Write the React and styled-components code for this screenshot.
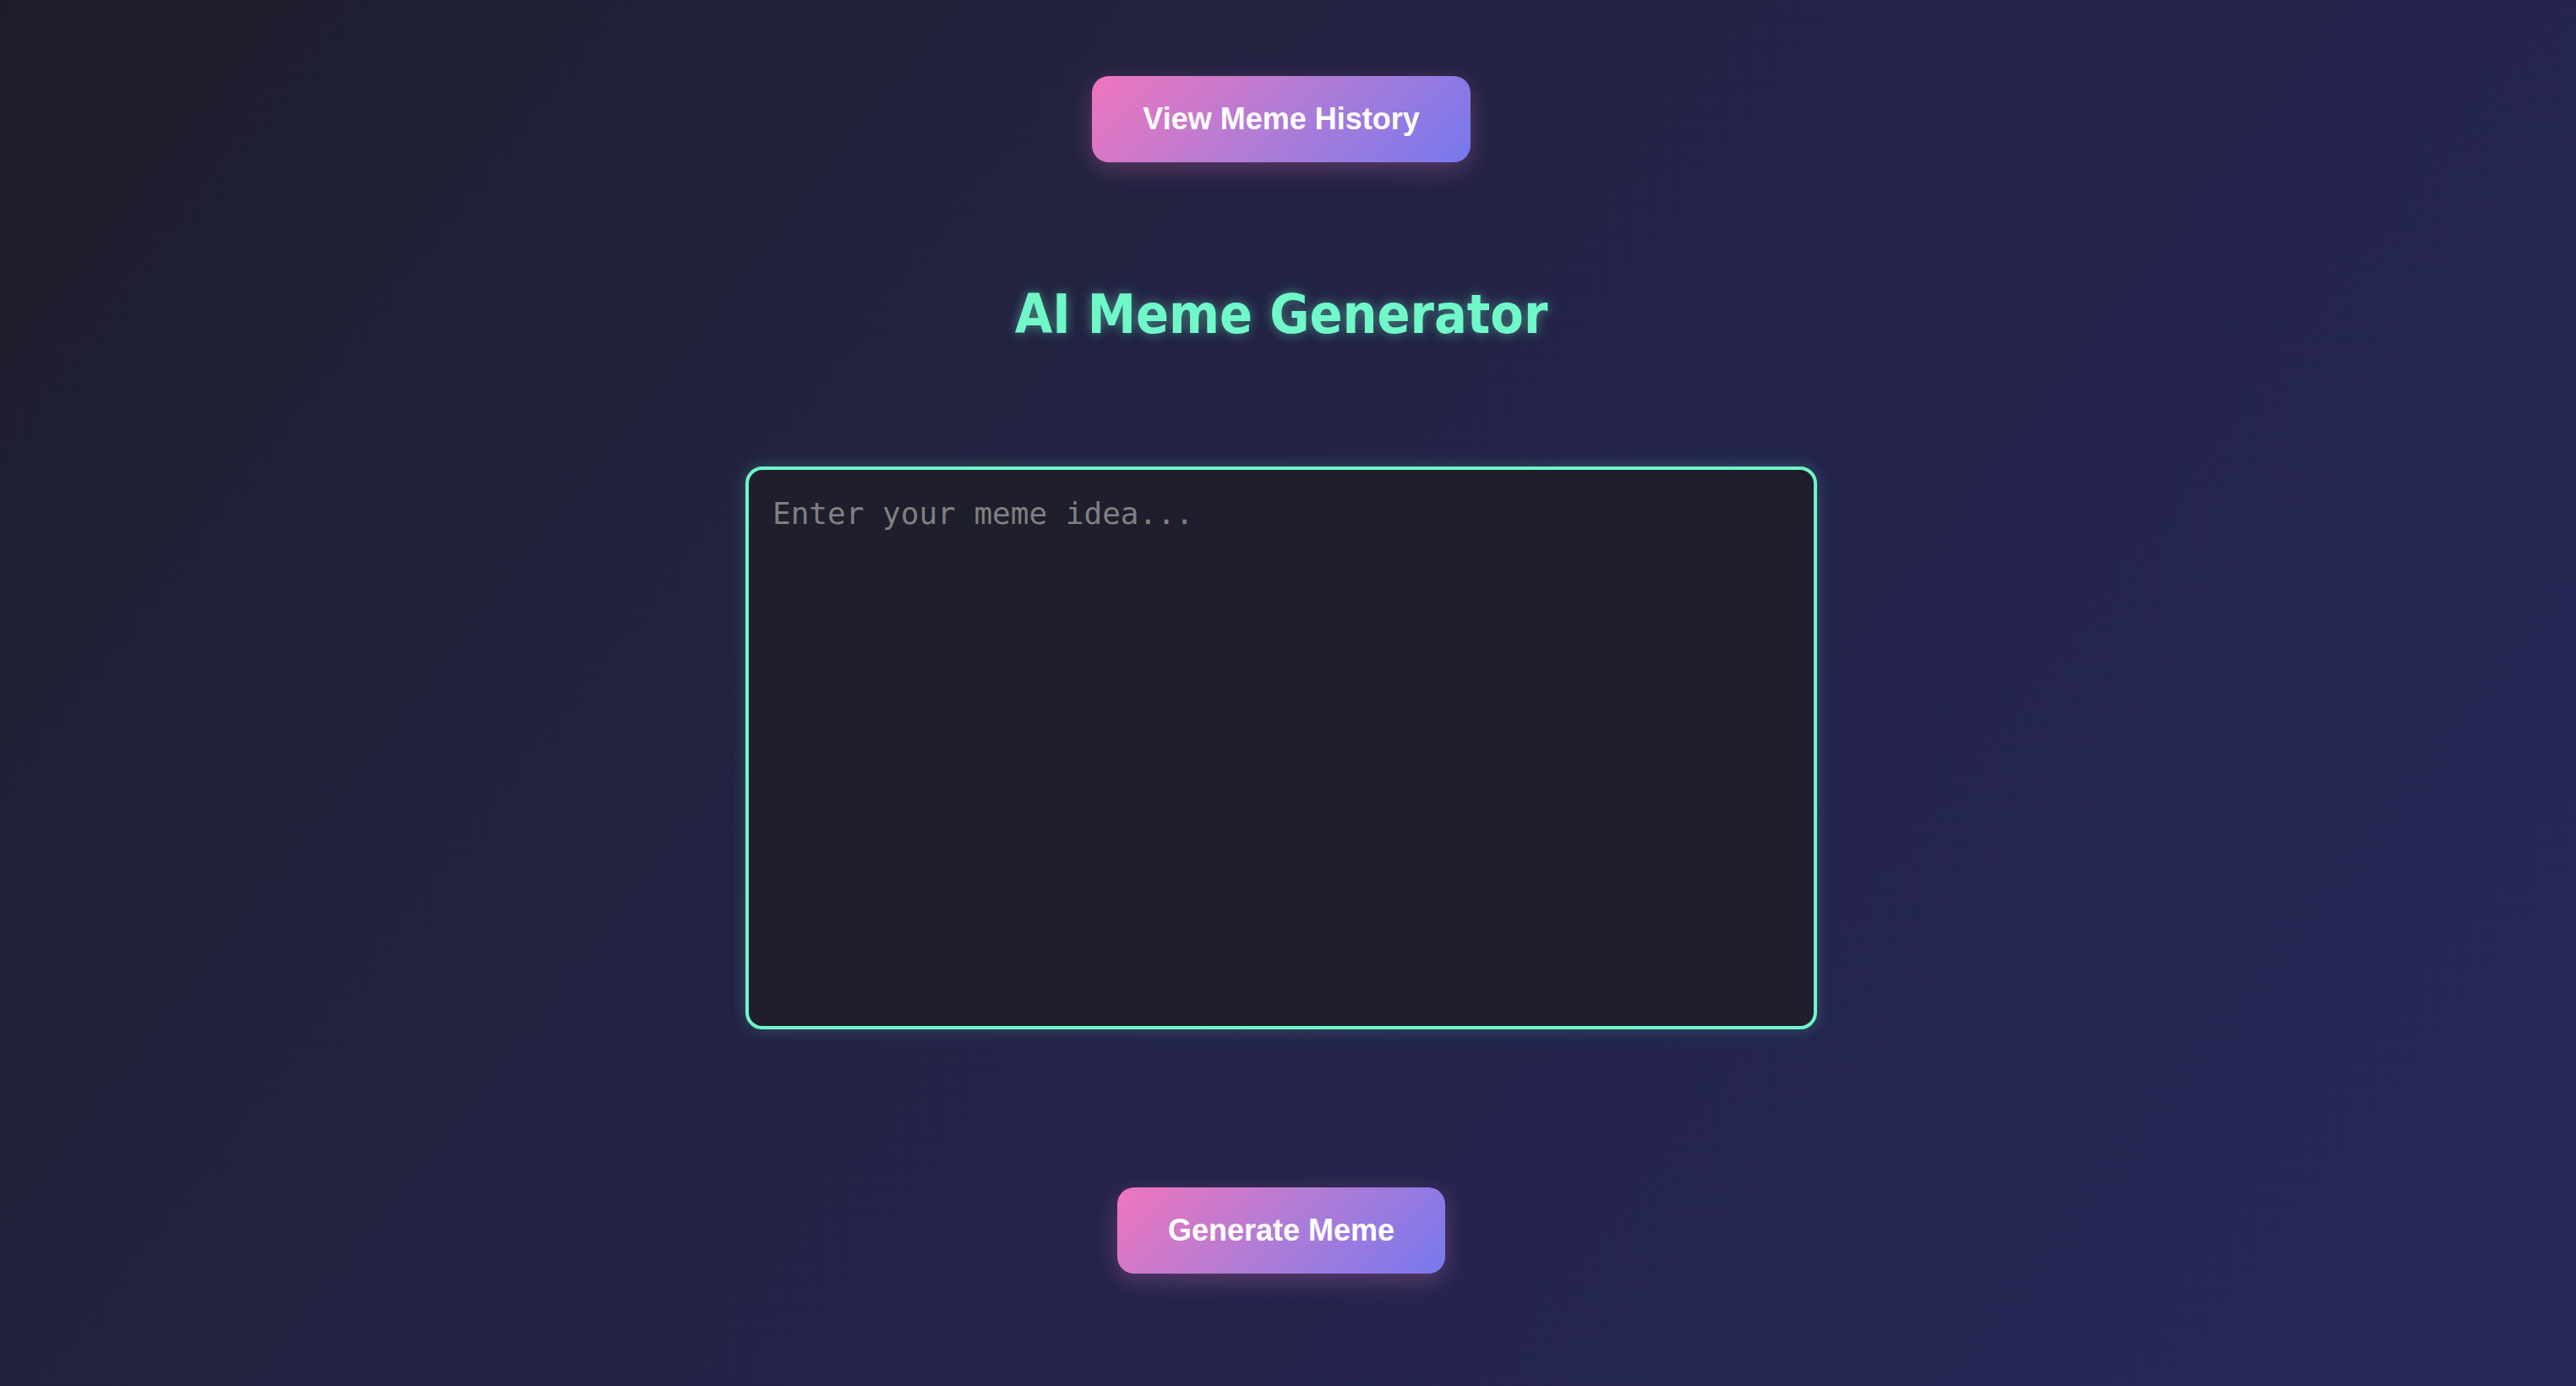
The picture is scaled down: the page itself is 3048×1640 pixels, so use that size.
import { useState } from 'react';
import styled, { createGlobalStyle } from 'styled-components';

const GlobalStyle = createGlobalStyle`
  html, body {
    margin: 0;
    padding: 0;
    min-height: 100%;
  }
  body {
    background: linear-gradient(128deg, #1d1d2a 0%, #22223f 30%, #24244c 60%, #262858 100%);
    font-family: 'Liberation Sans', Arial, sans-serif;
  }
`;

const Page = styled.div`
  min-height: 1640px;
  box-sizing: border-box;
  display: flex;
  flex-direction: column;
  align-items: center;
  padding: 90px 16px 0 0;
`;

// 그라데이션 버튼
const GlowButton = styled.button`
  background: linear-gradient(135deg, #f075bd 0%, #b07cd6 50%, #7778ee 100%);
  border: none;
  border-radius: 20px;
  padding: 30px 60px;
  font-family: 'Liberation Sans', Arial, sans-serif;
  font-weight: 700;
  font-size: 36px;
  color: #ffffff;
  cursor: pointer;
  outline: none;
  box-shadow: 0 8px 28px rgba(240, 117, 189, 0.28);
  margin-top: ${props => props.$top || '0px'};
  margin-bottom: ${props => props.$bottom || '0px'};

  &:active {
    opacity: 0.8;
  }
`;

// 제목
const Title = styled.h1`
  margin: 0 0 143px 0;
  font-family: 'DejaVu Sans Condensed', 'DejaVu Sans', sans-serif;
  font-stretch: condensed;
  font-weight: 700;
  font-size: 64px;
  color: #70f8c9;
  text-shadow: 0 0 14px rgba(112, 248, 201, 0.45);
`;

// 입력창
const IdeaInput = styled.textarea`
  width: 1268px;
  height: 666px;
  box-sizing: border-box;
  padding: 26px 28px;
  background: #1e1e2c;
  border: 4px solid #6ff5c8;
  border-radius: 20px;
  box-shadow: 0 0 18px rgba(111, 245, 200, 0.22);
  font-family: 'DejaVu Sans Mono', 'Liberation Mono', monospace;
  font-size: 36px;
  line-height: 1.45;
  color: #e6e6e6;
  caret-color: #f5c542;
  resize: none;
  outline: none;

  &::placeholder {
    color: #808080;
  }
`;

export default function App() {
  const [idea, setIdea] = useState('');

  return (
    <>
      <GlobalStyle />
      <Page>
        <GlowButton $bottom="143px">View Meme History</GlowButton>
        <Title>AI Meme Generator</Title>
        <IdeaInput
          autoFocus
          value={idea}
          placeholder="Enter your meme idea..."
          onChange={(e) => setIdea(e.target.value)}
        />
        <GlowButton $top="187px">Generate Meme</GlowButton>
      </Page>
    </>
  );
}
